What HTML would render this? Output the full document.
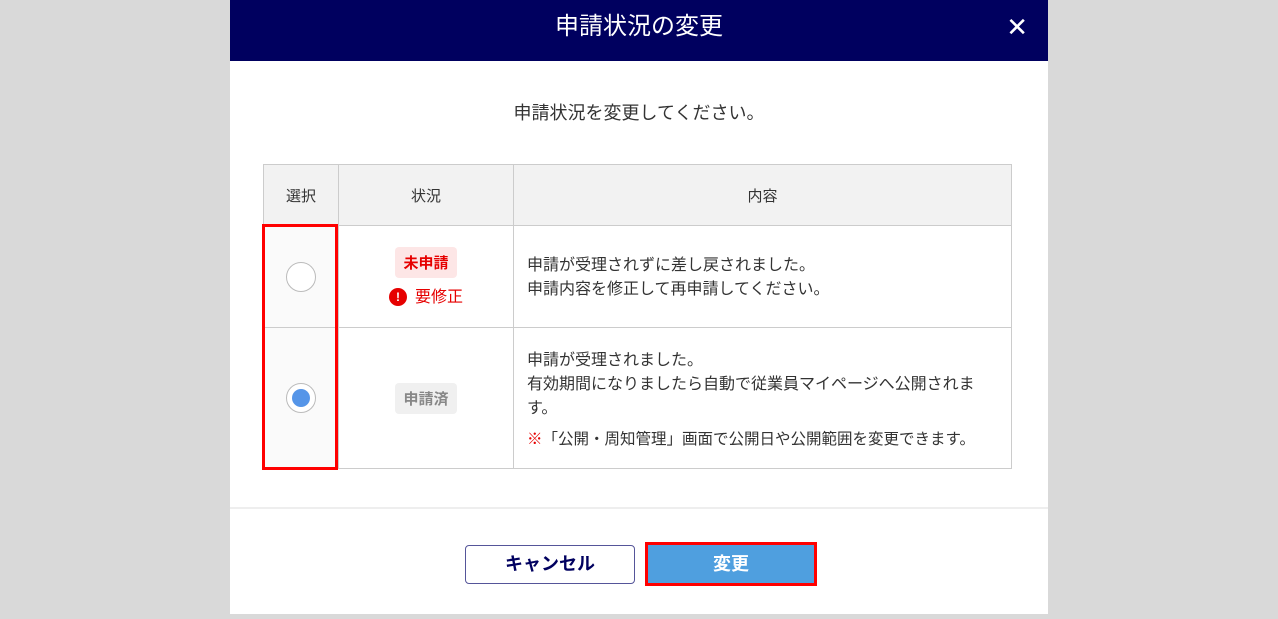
<!DOCTYPE html>
<html><head><meta charset="utf-8"><style>
*{margin:0;padding:0;box-sizing:border-box}
body{width:1278px;height:619px;background:#d9d9d9;font-family:"Liberation Sans","Noto Sans CJK JP",sans-serif;position:relative;overflow:hidden;color:#333}
.modal{position:absolute;left:230px;top:0;width:818px;height:614px;background:#fff}
.hd{height:61px;background:#00005f;color:#fff;font-size:24px;text-align:center;line-height:54px;position:relative}
.x{position:absolute;right:20px;top:0;font-size:26px;line-height:54px}
.msg{position:absolute;top:99px;width:100%;text-align:center;font-size:18px}
table{position:absolute;left:33px;top:164px;border-collapse:collapse;font-size:16px;table-layout:fixed}
td,th{border:1px solid #ccc}
th{background:#f2f2f2;font-weight:normal;height:61px;font-size:15px}
.sel{background:#fafafa;text-align:center}
.r{width:30px;height:30px;border-radius:50%;border:1px solid #bbb;background:#fff;margin:auto;position:relative}
.r.on::after{content:"";position:absolute;left:5px;top:5px;width:18px;height:18px;border-radius:50%;background:#5595e8}
.st{text-align:center}
.b{display:inline-block;padding:5px 8px;border-radius:4px;font-weight:bold;font-size:15px}
.txt{padding:0 26px 0 13px;line-height:24px}
.redbox{position:absolute;left:262px;top:224px;width:76px;height:246px;border:3px solid #f00}
.ft{position:absolute;top:507px;left:0;width:100%;border-top:2px solid #eee}
.btn{position:absolute;text-align:center;font-weight:bold;font-size:18px}
</style></head><body>
<div class="modal">
<div class="hd">申請状況の変更<span class="x">✕</span></div>
<div class="msg">申請状況を変更してください。</div>
<table>
<colgroup><col style="width:75px"><col style="width:175px"><col style="width:498px"></colgroup>
<tr><th>選択</th><th>状況</th><th>内容</th></tr>
<tr style="height:102px"><td class="sel"><div class="r"></div></td>
<td class="st"><span class="b" style="background:#fde6e6;color:#e60000">未申請</span><div style="color:#e60000;margin-top:5px;font-size:16px"><span style="display:inline-block;width:18px;height:18px;border-radius:50%;background:#e60000;color:#fff;font-size:12px;font-weight:bold;line-height:18px;vertical-align:1px;margin-right:8px">!</span>要修正</div></td>
<td class="txt" style="padding-top:2px">申請が受理されずに差し戻されました。<br>申請内容を修正して再申請してください。</td></tr>
<tr style="height:141px"><td class="sel"><div class="r on"></div></td>
<td class="st"><span class="b" style="background:#f0f0f0;color:#888">申請済</span></td>
<td class="txt" style="padding-top:4px">申請が受理されました。<br>有効期間になりましたら自動で従業員マイページへ公開されます。<div style="margin-top:7px;white-space:nowrap;font-size:15.5px"><span style="color:#e60000">※</span>「公開・周知管理」画面で公開日や公開範囲を変更できます。</div></td></tr>
</table>
<div class="ft"></div>
<div class="btn" style="left:235px;top:545px;width:170px;height:39px;border:1px solid #555599;border-radius:4px;color:#00005f;line-height:37px">キャンセル</div>
<div class="btn" style="left:415px;top:542px;width:172px;height:44px;border:3px solid #f00;background:#4f9fdf;color:#fff;line-height:38px">変更</div>
</div>
<div class="redbox"></div>
</body></html>
